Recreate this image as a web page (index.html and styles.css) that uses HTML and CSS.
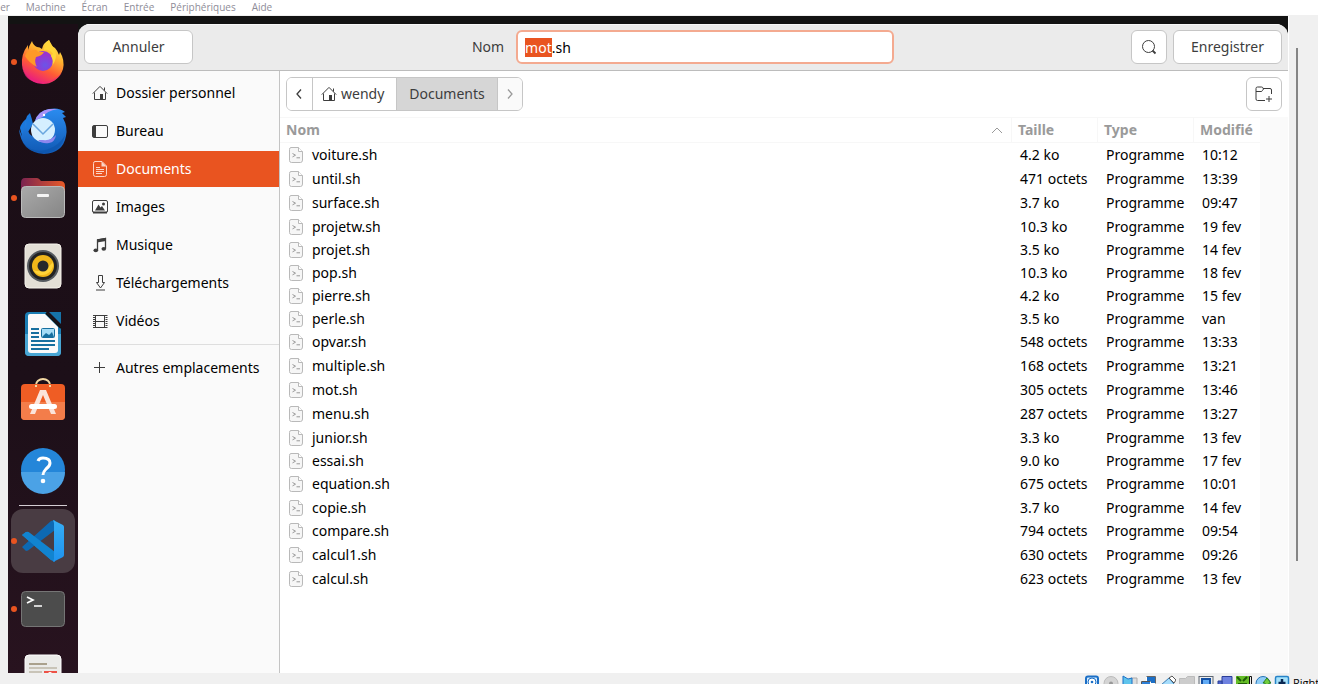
FILE: index.html
```html
<!DOCTYPE html>
<html lang="fr">
<head>
<meta charset="utf-8">
<title>Enregistrer sous</title>
<link rel="stylesheet" href="styles.css">
</head>
<body>
<svg class="defs" aria-hidden="true">
  <defs>
    <linearGradient id="fox" x1="0.8" y1="0" x2="0.3" y2="1"><stop offset="0" stop-color="#fff44f"/><stop offset=".35" stop-color="#ffb02e"/><stop offset=".65" stop-color="#ff5a36"/><stop offset="1" stop-color="#e6148a"/></linearGradient>
    <radialGradient id="globe" cx=".6" cy=".7"><stop offset="0" stop-color="#6a55e8"/><stop offset="1" stop-color="#9a35d0"/></radialGradient>
    <linearGradient id="bird" x1="0" y1="0" x2="0" y2="1"><stop offset="0" stop-color="#2b8cf0"/><stop offset="1" stop-color="#1059b4"/></linearGradient>
    <linearGradient id="back" x1="0" x2="1"><stop offset="0" stop-color="#7a2350"/><stop offset="1" stop-color="#e95a28"/></linearGradient>
    <linearGradient id="front" x1="0" y1="0" x2="1" y2="1"><stop offset="0" stop-color="#aaa"/><stop offset="1" stop-color="#858585"/></linearGradient>
    <linearGradient id="vsc" x1="0" y1="0" x2="0" y2="1"><stop offset="0" stop-color="#36aef5"/><stop offset="1" stop-color="#1f93ee"/></linearGradient>
    <symbol id="home" viewBox="0 0 16 16"><path d="M.8 8.600 8 1.400l7.200 7.200M2.500 7.500v7h11v-7M12.500 5.500v-3" fill="none" stroke="currentColor"/><path d="M8 9h3v5.500H8z" fill="currentColor"/></symbol>
    <symbol id="script" viewBox="0 0 16 16"><path d="M3 .5h7.500l4 4V13q0 2.500-2 2.500H3.500q-2 0-2-2V2.500q0-2 1.500-2z" fill="#f6f6f6" stroke="#b9b9b9"/><path d="M10.500.5v4h4" fill="#fff" stroke="#b9b9b9"/><path d="m4.500 6.500 3 1.700-3 1.700M8.500 10.800h3.500" fill="none" stroke="#999"/></symbol>
  </defs>
</svg>

<nav class="menubar">
  <a href="#">Fichier</a><a href="#">Machine</a><a href="#">Écran</a><a href="#">Entrée</a><a href="#">Périphériques</a><a href="#">Aide</a>
</nav>

<div class="machine">
  <div class="screen">
    <div class="topbar"></div>
    <ul class="dock">
      <li class="running"><svg viewBox="0 0 64 64"><path d="M17 20q1-4 4-9 1 4 5 6 3 0 5 2 1-6 7-9 1 5 6 8 2 2 4 7l1-3q5 8 3 17A21 21 0 0 1 11 35q-1-11 6-20z" fill="url(#fox)"/><path d="M11 34q1 13 14 17 14 4 26-8-6 10-20 10-19 0-20-19z" fill="#f0277c" opacity=".65"/><circle cx="32" cy="31" r="10" fill="url(#globe)"/><path d="M14 26q2-6 6-5 5-3 7 1h6q-2 4-8 5-2 5 1 10-8-4-12-11z" fill="#ff9928"/><path d="M33 20q6-1 9 4-2 0-2 2 3 5 1 10 6-8 3-15-3-6-6-11-5 5-5 10z" fill="#ffd63a"/></svg></li>
      <li><svg viewBox="0 0 64 64"><path d="M9 30q1-5 6-9 1-4 4-6 2 6 3 11L12 42z" fill="#1a78dc"/><path d="M24 23q3-10 14-12 10-2 16 3l-3 1 4 4-3 1q5 9 3 18-3 17-22 18Q10 54 8 31l3 7 4-16q0 12 6 16z" fill="url(#bird)"/><path d="M24 23q3-10 14-12l9 0q-12 2-15 8-4 1-8 4z" fill="#a792f8"/><circle cx="33" cy="17" r="1.200" fill="#fff"/><circle cx="32" cy="32" r="12" fill="#d5efff"/><path d="m22 26 10 10 10-10" fill="none" stroke="#6aa6de" stroke-width="1.500"/><path d="M32 42q8 1 13-5-1 7-7 8-7 1-11-3z" fill="#8d86ee"/><path d="M11 44q13 14 29 6 9-4 14-13-3 17-22 18-14 0-21-11z" fill="#0c54aa" opacity=".6"/></svg></li>
      <li class="running"><svg viewBox="0 0 64 64"><path d="M10 17q0-5 4-5h12q2 0 4 3h19q5 0 5 5v18H10z" fill="url(#back)"/><rect x="10.500" y="20.500" width="43" height="31" rx="4" fill="url(#front)" stroke="#bbb"/><rect x="26" y="28" width="12" height="3" rx="1" fill="#f4f4f4"/></svg></li>
      <li><svg viewBox="0 0 64 64"><rect x="14" y="10" width="36" height="44" rx="4" fill="#e3dfd6" stroke="#f6f3ec"/><circle cx="32" cy="32" r="16" fill="#555a5f"/><circle cx="32" cy="32" r="14" fill="#222"/><circle cx="32" cy="32" r="11" fill="#f0b61a"/><path d="M22 36q10 4 20-8a11 11 0 0 1-20 8z" fill="#ffd338"/><circle cx="32" cy="32" r="5.500" fill="#26282b"/></svg></li>
      <li><svg viewBox="0 0 64 64"><path d="M18 10h17l15 15v25q0 4-4 4H18q-4 0-4-4V14q0-4 4-4z" fill="#1b7eb4"/><path d="M14 32h36v18q0 4-4 4H18q-4 0-4-4z" fill="#48a6d4"/><path d="M19 12h15l13 13v23q0 3-3 3H20q-3 0-3-3V14q0-2 2-2z" fill="#fafafa"/><path d="M38 10h12v12z" fill="#1673a8"/><path d="M35 11 50 26" stroke="#111" stroke-width="2"/><path d="M20 27h8M20 31h8M20 35h8M20 39h24M20 43h24M20 47h18" stroke="#176f9f" stroke-width="2"/><rect x="30.500" y="26.500" width="13" height="9" rx="1" fill="#a5dcf6" stroke="#176f9f"/><path d="m31 35 4-4 3 2 3-3 2 5z" fill="#176f9f"/></svg></li>
      <li><svg viewBox="0 0 64 64"><path d="M25 17v-2a7 6 0 0 1 14 0v2" fill="none" stroke="#f3d9a4" stroke-width="2"/><rect x="10" y="14" width="44" height="36" rx="4" fill="#ef5d24"/><path d="M10 32h44v14q0 4-4 4H14q-4 0-4-4z" fill="#f37d4a"/><path d="M25 17v-2M39 15v2" stroke="#f3d9a4" stroke-width="2"/><path d="m29 20-10 24h5l8-19 8 19h5L35 20z" fill="#fbe4da"/><rect x="18" y="34" width="28" height="5" rx="2.500" fill="#fff"/></svg></li>
      <li><svg viewBox="0 0 64 64"><circle cx="32" cy="32" r="22" fill="#2486d9"/><path d="M10 34h44a22 22 0 0 1-44 0z" fill="#4ba2e6"/><path d="M27 23q1-3 5-3 7 0 7 5 0 3-4 6-3 3-3 6" fill="none" stroke="#fff" stroke-width="3"/><circle cx="32" cy="43" r="2.300" fill="#fff"/></svg></li>
      <li class="divider"></li>
      <li class="running active"><svg viewBox="0 0 64 64"><path d="m11 26 4-3 29 21v8l-4-1z" fill="#1282cc"/><path d="m11 38 4 4q2 0 4-2l25-19V11l-4 1z" fill="#0d69b3"/><path d="m11 26 4-3q2-1 4 1l25 19v10l-4-2z" fill="#1184d0"/><path d="m42 11 10 5q1 1 1 2v28q0 1-1 2l-10 5 1-3V14z" fill="url(#vsc)"/></svg></li>
      <li class="running"><svg viewBox="0 0 64 64"><rect x="10.500" y="14.500" width="43" height="35" rx="4" fill="#4c4c4c" stroke="#757575"/><path d="m16 20 6 3-6 3M23 29h8" fill="none" stroke="#fff" stroke-width="1.700"/></svg></li>
      <li><svg viewBox="0 0 64 64"><rect x="14" y="10" width="36" height="44" rx="4" fill="#ebebe9" stroke="#fff"/><path d="M18 19h18" stroke="#aaa18d" stroke-width="2"/><path d="M18 23h28M18 27h13" stroke="#c9c4b8" stroke-width="2"/><path d="M33 26h13v10H33z" fill="#ed5247"/><circle cx="39" cy="29" r="2" fill="#fff"/></svg></li>
    </ul>

    <main class="dialog">
      <header class="titlebar">
        <div class="start"><button class="btn wide">Annuler</button></div>
        <div class="filename"><label for="name">Nom</label><input id="name" type="text" value="mot.sh" autofocus></div>
        <div class="end">
          <button class="btn square" aria-label="Rechercher"><svg class="icon" viewBox="0 0 16 16"><circle cx="7.500" cy="7.500" r="6" fill="none" stroke="currentColor"/><path d="m11.500 11.500 3 3" stroke="currentColor" stroke-width="1.800"/></svg></button>
          <button class="btn wide">Enregistrer</button>
        </div>
      </header>

      <div class="content">
        <nav class="places">
          <a href="#"><svg class="icon"><use href="#home"/></svg>Dossier personnel</a>
          <a href="#"><svg class="icon" viewBox="0 0 16 16"><rect x=".5" y="2.500" width="15" height="12" rx="1.500" fill="none" stroke="currentColor"/><path d="M1 3h3v11H1z" fill="currentColor"/></svg>Bureau</a>
          <a href="#" class="selected"><svg class="icon" viewBox="0 0 16 16"><path d="M3 .5h7l4.500 4.500v8.500q0 2-2 2h-9q-2 0-2-2v-11q0-2 1.500-2z" fill="none" stroke="currentColor"/><path d="M9.500.5v5h5z" fill="currentColor"/><path d="M4 6.500h4M4 8.500h8M4 10.500h8M4 12.500h6" stroke="currentColor"/></svg>Documents</a>
          <a href="#"><svg class="icon" viewBox="0 0 16 16"><rect x=".5" y="1.500" width="15" height="12" rx="1.500" fill="none" stroke="currentColor"/><path d="M1 12.500h14v2H1zM3 11.500l3.500-6 2 3L10 7l3 4.500z" fill="currentColor"/><circle cx="11.500" cy="5" r="1.500" fill="currentColor"/></svg>Images</a>
          <a href="#"><svg class="icon" viewBox="0 0 16 16"><path d="M5.500 13V3l8-1.500v10" fill="none" stroke="currentColor" stroke-width="1.300"/><path d="M5 2.300 14 .8V4L5 5.500z" fill="currentColor"/><ellipse cx="3.800" cy="13.300" rx="2.300" ry="1.900" fill="currentColor"/><ellipse cx="11.800" cy="11.800" rx="2.300" ry="1.900" fill="currentColor"/></svg>Musique</a>
          <a href="#"><svg class="icon" viewBox="0 0 16 16"><path d="M6.500.5h4v7h2L8.500 13l-4-5.500h2zM4 15h9" fill="none" stroke="currentColor"/></svg>Téléchargements</a>
          <a href="#"><svg class="icon" viewBox="0 0 16 16"><path d="M3.500 2v13M12.500 2v13M1 2.500h14M1 14.500h14M3.500 8.500h9" fill="none" stroke="currentColor"/><path d="M2 2v13M14.500 2v13" stroke="currentColor" stroke-width="2" stroke-dasharray="1 1"/></svg>Vidéos</a>
          <hr>
          <a href="#"><svg class="icon" viewBox="0 0 16 16"><path d="M2 7.500h11M7.500 2v11" stroke="currentColor"/></svg>Autres emplacements</a>
        </nav>

        <section class="browser">
          <div class="toolbar">
            <div class="path">
              <button class="arrow" aria-label="Précédent"><svg viewBox="0 0 8 16"><path d="M5 3.500 1 8l4 4.500" fill="none" stroke="currentColor" stroke-width="1.300"/></svg></button>
              <button class="crumb parent"><svg class="icon"><use href="#home"/></svg>wendy</button>
              <button class="crumb current">Documents</button>
              <button class="arrow" aria-label="Suivant" disabled><svg viewBox="0 0 8 16"><path d="m2 3.500 4 4.500-4 4.500" fill="none" stroke="currentColor" stroke-width="1.300"/></svg></button>
            </div>
            <button class="btn square" aria-label="Nouveau dossier"><svg class="folder" viewBox="0 0 18 16"><path d="M10 14.500H2.500q-1.500 0-1.500-1.500V2.500Q1 1 2.500 1h4Q8 1 8 2.500h7q1.500 0 1.500 1.500v4M1 5.500h5q1 0 1.500-1L8.500 3M14 10v6M11 13h6" fill="none" stroke="currentColor"/></svg></button>
          </div>
          <div class="listing">
            <table>
              <colgroup><col><col class="c-size"><col class="c-type"><col class="c-date"></colgroup>
              <thead><tr><th><span class="sort">Nom<svg viewBox="0 0 12 8"><path d="M1 7l5-5 5 5" fill="none" stroke="currentColor"/></svg></span></th><th>Taille</th><th>Type</th><th>Modifié</th></tr></thead>
              <tbody>
                <tr><td><svg><use href="#script"/></svg>voiture.sh</td><td>4.2 ko</td><td>Programme</td><td>10:12</td></tr>
                <tr><td><svg><use href="#script"/></svg>until.sh</td><td>471 octets</td><td>Programme</td><td>13:39</td></tr>
                <tr><td><svg><use href="#script"/></svg>surface.sh</td><td>3.7 ko</td><td>Programme</td><td>09:47</td></tr>
                <tr class="tight"><td><svg><use href="#script"/></svg>projetw.sh</td><td>10.3 ko</td><td>Programme</td><td>19 fev</td></tr>
                <tr class="tight"><td><svg><use href="#script"/></svg>projet.sh</td><td>3.5 ko</td><td>Programme</td><td>14 fev</td></tr>
                <tr class="tight"><td><svg><use href="#script"/></svg>pop.sh</td><td>10.3 ko</td><td>Programme</td><td>18 fev</td></tr>
                <tr class="tight"><td><svg><use href="#script"/></svg>pierre.sh</td><td>4.2 ko</td><td>Programme</td><td>15 fev</td></tr>
                <tr class="tight"><td><svg><use href="#script"/></svg>perle.sh</td><td>3.5 ko</td><td>Programme</td><td>van</td></tr>
                <tr><td><svg><use href="#script"/></svg>opvar.sh</td><td>548 octets</td><td>Programme</td><td>13:33</td></tr>
                <tr><td><svg><use href="#script"/></svg>multiple.sh</td><td>168 octets</td><td>Programme</td><td>13:21</td></tr>
                <tr><td><svg><use href="#script"/></svg>mot.sh</td><td>305 octets</td><td>Programme</td><td>13:46</td></tr>
                <tr><td><svg><use href="#script"/></svg>menu.sh</td><td>287 octets</td><td>Programme</td><td>13:27</td></tr>
                <tr class="tight"><td><svg><use href="#script"/></svg>junior.sh</td><td>3.3 ko</td><td>Programme</td><td>13 fev</td></tr>
                <tr class="tight"><td><svg><use href="#script"/></svg>essai.sh</td><td>9.0 ko</td><td>Programme</td><td>17 fev</td></tr>
                <tr><td><svg><use href="#script"/></svg>equation.sh</td><td>675 octets</td><td>Programme</td><td>10:01</td></tr>
                <tr class="tight"><td><svg><use href="#script"/></svg>copie.sh</td><td>3.7 ko</td><td>Programme</td><td>14 fev</td></tr>
                <tr><td><svg><use href="#script"/></svg>compare.sh</td><td>794 octets</td><td>Programme</td><td>09:54</td></tr>
                <tr><td><svg><use href="#script"/></svg>calcul1.sh</td><td>630 octets</td><td>Programme</td><td>09:26</td></tr>
                <tr><td><svg><use href="#script"/></svg>calcul.sh</td><td>623 octets</td><td>Programme</td><td>13 fev</td></tr>
              </tbody>
            </table>
            <div class="gutter"></div>
          </div>
        </section>
      </div>
    </main>
  </div>
  <div class="outer-scroll"><div class="thumb"></div></div>
</div>

<footer class="statusbar">
  <svg viewBox="0 0 16 16"><rect x="2" y="1.500" width="12" height="14" rx="2" fill="#d4ecff" stroke="#1c6fc6" stroke-width="2"/><circle cx="8" cy="7" r="4" fill="#fff" stroke="#1c6fc6"/><circle cx="8" cy="7" r="1.300" fill="#1c6fc6"/></svg>
  <svg viewBox="0 0 16 16"><circle cx="8" cy="8.500" r="7" fill="#d4d4d4" stroke="#bbb"/><circle cx="8" cy="8.500" r="2" fill="#999"/></svg>
  <svg viewBox="0 0 16 16"><path d="M9 3h6v12H9z" fill="#ddd" stroke="#aaa"/><path d="M1 1l5 3 4-1v12H1z" fill="#5fc4ec" stroke="#1c6fc6"/></svg>
  <svg viewBox="0 0 16 16"><path d="M5.500 1.500h9v7h-9z" fill="#1c6fc6" stroke="#fff"/><path d="M5.500 1.500h9v7" fill="none" stroke="#666"/><path d="M.5 6.500h9v8h-9z" fill="#2d80d8" stroke="#fff"/><path d="M.5 14V6.500h9" fill="none" stroke="#555"/></svg>
  <svg viewBox="0 0 16 16"><path d="m1 10 8-7 5 6-7 7z" fill="#a5dcfb" stroke="#3a7db5"/><path d="m9 3 3-2 4 4-2 3z" fill="#fff" stroke="#555"/></svg>
  <svg viewBox="0 0 16 16"><path d="M.5 3.500h6l2-2h7v14H.5z" fill="#ccc" stroke="#bbb"/></svg>
  <svg viewBox="0 0 16 16"><rect x="1" y="1.500" width="14" height="14" fill="#eee" stroke="#5d6673"/><rect x="4" y="4" width="8" height="8" fill="#61abf5" stroke="#1450a4" stroke-width="2"/></svg>
  <svg viewBox="0 0 16 16"><path d="M5 1.500h10v9H5z" fill="#6f82e0" stroke="#2b3e98"/><path d="M1 6h4v8H1z" fill="#4b60c8" stroke="#2b3e98"/></svg>
  <svg viewBox="0 0 16 16"><path d="M0 1h13v15H0z" fill="#65bd27"/><path d="m1 2 4 4M11 2 7 6M2 9h9" stroke="#1f5c08" stroke-width="2"/><path d="M13.500 1.500h2v14h-2z" fill="#eee" stroke="#111"/></svg>
  <svg viewBox="0 0 16 16"><circle cx="8" cy="8.500" r="7" fill="#90cdf6" stroke="#2674b6"/><path d="m8 8 4-5 4 5h-2v7h-4V8z" fill="#71cc3e" stroke="#287e1d"/></svg>
  <svg viewBox="0 0 16 16"><rect x="1.500" y="1.500" width="13" height="14" rx="1.500" fill="#a6e2fb" stroke="#2783c8" stroke-width="1.500"/><path d="M8 4v8M4.500 8h7" stroke="#0a2852" stroke-width="2.500"/></svg>
  <span>Right Ctrl</span>
</footer>
<script>
  const field = document.getElementById('name');
  field.focus();
  field.setSelectionRange(0, 3);
</script>
</body>
</html>
```
FILE: styles.css
```css
* { box-sizing: border-box; }

body {
  margin: 0;
  height: 100vh;
  display: flex;
  flex-direction: column;
  overflow: hidden;
  background: #f0f0f0;
  color: #000;
  font: 14px/20px "Noto Sans", sans-serif;
}

a { color: inherit; text-decoration: none; }
button, input { font: inherit; color: inherit; }
svg { flex: none; }
.defs { position: absolute; width: 0; height: 0; }
.icon { width: 16px; height: 16px; color: #3d3d3d; }

.menubar {
  flex: none;
  display: flex;
  gap: 16px;
  height: 16px;
  margin-left: -21px;
  background: #fff;
  border-bottom: 1px solid #f0f0f0;
  color: #8e8c98;
  font: 10px/14px "Open Sans", sans-serif;
}

.machine { flex: 1; min-height: 0; display: flex; padding-left: 8px; }

.screen {
  flex: 1;
  min-width: 0;
  display: grid;
  grid-template-columns: 70px 1fr;
  grid-template-rows: 8px minmax(0, 1fr);
  background: #131313;
}

.topbar { grid-column: 1 / -1; }

.dock {
  margin: 0;
  padding: 4px 3px 0;
  list-style: none;
  overflow: hidden;
  background: linear-gradient(#1b0e16, #1c0f18 55%, #28131f);
}

.dock li { position: relative; height: 64px; margin: 2px 0 4px; }
.dock li + li { margin-top: 0; }
.dock svg { display: block; width: 64px; height: 64px; }
.dock .active { background: #493c43; border-radius: 12px; }
.dock .divider { height: 1px; margin: -1px 8px 3px; background: #d3ccd2; }

.dock .running::before {
  content: "";
  position: absolute;
  left: 0;
  top: 29px;
  width: 6px;
  height: 6px;
  border-radius: 50%;
  background: #e95420;
}

.dialog {
  min-width: 0;
  display: flex;
  flex-direction: column;
  border-radius: 12px 12px 0 0;
  overflow: hidden;
  background: #fff;
}

.titlebar {
  flex: none;
  display: grid;
  grid-template-columns: 1fr auto 1fr;
  padding: 6px;
  background: #ebebeb;
  border-bottom: 1px solid #bcbcbc;
  box-shadow: inset 0 1px #f8f8f8;
  color: #3d3d3d;
}

.end { display: flex; justify-content: flex-end; gap: 6px; }

.btn {
  height: 34px;
  padding: 0;
  background: #fff;
  border: 1px solid #c6c6c6;
  border-radius: 6px;
  color: #3d3d3d;
}

.wide { width: 109px; }
.square { width: 36px; display: grid; place-items: center; }
.folder { width: 18px; height: 16px; }

.filename { display: flex; align-items: center; gap: 12px; }

.filename input {
  width: 378px;
  height: 34px;
  padding: 0 7px;
  border: 2px solid #f4aa90;
  border-radius: 6px;
  outline: 0;
  background: #fff;
  color: #000;
}

.filename input::selection { background: #e95420; color: #fff; }

.content { flex: 1; min-height: 0; display: flex; }

.places {
  flex: none;
  width: 202px;
  display: flex;
  flex-direction: column;
  gap: 2px;
  padding-top: 4px;
  background: #fafafa;
  border-right: 1px solid #c4c4c4;
}

.places a {
  display: flex;
  align-items: center;
  gap: 8px;
  height: 36px;
  padding-left: 14px;
}

.places .selected { background: #e95420; color: #fff; }
.places .selected .icon { color: #fbd5c8; }
.places hr { width: 100%; margin: 3px 0; border: 0; border-top: 1px solid #dedede; }

.browser { flex: 1; min-width: 0; display: flex; flex-direction: column; }
.toolbar { display: flex; justify-content: space-between; padding: 6px; }

.path { display: flex; border: 1px solid #c6c6c6; border-radius: 6px; overflow: hidden; }
.path button {
  display: flex;
  align-items: center;
  justify-content: center;
  height: 32px;
  padding: 0;
  border: 0;
  background: #fff;
  color: #3d3d3d;
}
.path button + button { border-left: 1px solid #c6c6c6; }
.path .arrow { width: 25px; }
.path .arrow svg { width: 8px; height: 16px; }
.path .arrow:disabled { background: #fafafa; color: #9a9a9a; }
.path .crumb { gap: 4px; width: 84px; }
.path .parent { justify-content: flex-start; padding-left: 8px; }
.path .current { width: 101px; background: #d6d6d6; }

.listing { flex: 1; min-height: 0; display: flex; }
.listing table {
  flex: 1;
  align-self: flex-start;
  table-layout: fixed;
  border-collapse: separate;
  border-spacing: 0;
}
.c-size { width: 86px; }
.c-type { width: 96px; }
.c-date { width: 67px; }
.gutter { width: 28px; background: #fafafa; }

th {
  height: 26px;
  padding: 0 6px;
  border: solid #f7f7f7;
  border-width: 1px 0;
  text-align: left;
  color: #9a9a9a;
}
th + th { border-left-width: 1px; }
.sort { display: flex; align-items: center; justify-content: space-between; }
.sort svg { width: 12px; height: 8px; margin-right: 2px; }

td { height: 24px; padding: 0 0 0 9px; line-height: 20px; white-space: nowrap; }
.tight td { height: 23px; }
td svg { width: 16px; height: 16px; margin: 0 8px 0 -1px; vertical-align: -3px; }

.outer-scroll { width: 30px; padding: 32px 0 0 7px; border-left: 1px solid #fff; }
.thumb { width: 2px; height: 82%; background: #858585; }

.statusbar {
  flex: none;
  display: flex;
  justify-content: flex-end;
  gap: 3px;
  height: 11px;
  padding-top: 2px;
  overflow: hidden;
  white-space: nowrap;
  font: 11px/16px "Open Sans", sans-serif;
}
.statusbar svg { width: 16px; height: 16px; }
.statusbar span { flex: none; width: 25px; }
```
